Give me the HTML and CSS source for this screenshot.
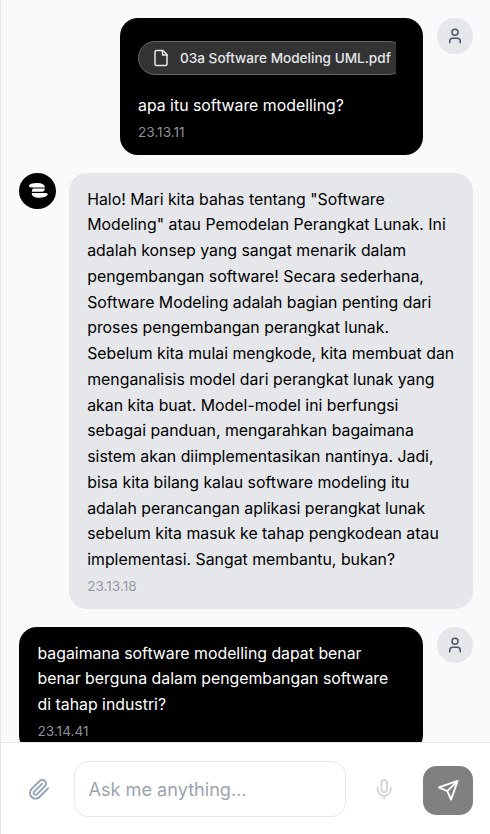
FILE: index.html
```html
<!DOCTYPE html>
<html lang="id">
<head>
<meta charset="utf-8">
<title>Chat</title>
<link rel="stylesheet" href="styles.css">
</head>
<body>
<div class="app">
  <main class="messages">
    <div class="row user">
      <div class="bubble dark">
        <div class="chip-clip">
          <div class="chip">
            <svg class="file-icon" viewBox="0 0 24 24"><path d="M14.5 2H6a2 2 0 0 0-2 2v16a2 2 0 0 0 2 2h12a2 2 0 0 0 2-2V7.500Z"/><path d="M14 2v6h6"/></svg>
            <span>03a Software Modeling UML.pdf</span>
          </div>
        </div>
        <p class="text">apa itu software modelling?</p>
        <time>23.13.11</time>
      </div>
      <div class="avatar"><svg viewBox="0 0 24 24"><circle cx="12" cy="7" r="4"/><path d="M19 21v-2a4 4 0 0 0-4-4H9a4 4 0 0 0-4 4v2"/></svg></div>
    </div>
    <div class="row bot">
      <div class="avatar logo"><svg viewBox="0 0 36 36"><path d="M9 12.500Q9.500 10 17 10Q24.800 10.200 25 14.400H12Q8.800 14.500 9 12.500Z"/><path d="M13 15.500H24.900Q24.500 18.700 22 18.700H11.800Q12 15.900 13 15.500Z"/><path d="M11.700 19.900H25.500Q28.400 19.900 27.500 22Q25.500 24.700 19 24.700Q11.500 24.600 11.700 19.900Z"/></svg></div>
      <div class="bubble light">
        <p class="text">Halo! Mari kita bahas tentang "Software<br>Modeling" atau Pemodelan Perangkat Lunak. Ini<br>adalah konsep yang sangat menarik dalam<br>pengembangan software! Secara sederhana,<br>Software Modeling adalah bagian penting dari<br>proses pengembangan perangkat lunak.<br>Sebelum kita mulai mengkode, kita membuat dan<br>menganalisis model dari perangkat lunak yang<br>akan kita buat. Model-model ini berfungsi<br>sebagai panduan, mengarahkan bagaimana<br>sistem akan diimplementasikan nantinya. Jadi,<br>bisa kita bilang kalau software modeling itu<br>adalah perancangan aplikasi perangkat lunak<br>sebelum kita masuk ke tahap pengkodean atau<br>implementasi. Sangat membantu, bukan?</p>
        <time>23.13.18</time>
      </div>
    </div>
    <div class="row user">
      <div class="bubble dark wide">
        <p class="text">bagaimana software modelling dapat benar<br>benar berguna dalam pengembangan software<br>di tahap industri?</p>
        <time>23.14.41</time>
      </div>
      <div class="avatar"><svg viewBox="0 0 24 24"><circle cx="12" cy="7" r="4"/><path d="M19 21v-2a4 4 0 0 0-4-4H9a4 4 0 0 0-4 4v2"/></svg></div>
    </div>
  </main>
  <footer class="composer">
    <button class="clip" aria-label="Attach"><svg viewBox="0 0 24 24"><path d="m21.440 11.050-9.190 9.190a6 6 0 0 1-8.490-8.490l8.570-8.570A4 4 0 1 1 18 8.840l-8.590 8.570a2 2 0 0 1-2.830-2.830l8.490-8.480"/></svg></button>
    <input type="text" placeholder="Ask me anything...">
    <button class="mic" aria-label="Voice"><svg viewBox="0 0 24 24"><path d="M12 2a3 3 0 0 0-3 3v7a3 3 0 0 0 6 0V5a3 3 0 0 0-3-3Z"/><path d="M19 10v2a7 7 0 0 1-14 0v-2M12 19v3"/></svg></button>
    <button class="send" aria-label="Send"><svg viewBox="0 0 24 24"><path d="M22 2 2 9 11 13 15 22ZM22 2 11 13"/></svg></button>
  </footer>
</div>
</body>
</html>
```
FILE: styles.css
```css
* { box-sizing: border-box; }
body { margin: 0; font-family: Inter, sans-serif; }
.app {
  height: 834px;
  display: flex;
  flex-direction: column;
  border-left: 1px solid #e5e7eb;
  background: #f9fafb;
  overflow: hidden;
}
.messages {
  height: 742px;
  flex: none;
  padding: 18px 17px 0 18px;
  display: flex;
  flex-direction: column;
  gap: 18px;
  overflow: hidden;
  background: #f9fafc;
}
.row { display: flex; flex: none; align-items: flex-start; }
.user { justify-content: flex-end; gap: 14px; }
.bot { gap: 13px; }
.bubble { padding: 13.500px 18px 13.750px; border-radius: 18px; }
.dark { width: 303px; background: #000; color: #fff; }
.bubble.wide { width: 404px; padding: 14px 18.500px 13.250px; }
.bubble.light { width: 404px; padding: 14px 18.200px 13.250px; background: #e5e7eb; color: #000; }
.text { margin: 0; font-size: 15.850px; line-height: 25.750px; white-space: nowrap; }
time {
  display: block;
  margin-top: 4.500px;
  font-size: 13.600px;
  line-height: 18px;
  color: #9ca3af;
}
.dark time { color: #8f9197; }
.light time { margin-top: 4px; padding-bottom: 0.500px; color: #9799a5; }
.wide time { margin-top: 4px; }
.chip-clip { width: 258px; overflow: hidden; margin: 9px 0 18px; }
.chip {
  width: 268px;
  height: 34px;
  display: flex;
  align-items: center;
  gap: 10px;
  padding-left: 13px;
  border: 1px solid #666;
  border-radius: 17px;
  background: #333;
  color: #e5e7eb;
  font-size: 13.580px;
  font-weight: 500;
  white-space: nowrap;
}
svg {
  display: block;
  fill: none;
  stroke: currentColor;
  stroke-width: 2;
  stroke-linecap: round;
  stroke-linejoin: round;
}
.file-icon { width: 18px; height: 18px; }
.avatar {
  flex: none;
  width: 36px;
  height: 36px;
  display: grid;
  place-items: center;
  border-radius: 50%;
  background: #e5e7eb;
  color: #4b5563;
}
.avatar svg { width: 18px; height: 18px; }
.avatar.logo { width: 37px; background: #000; color: #fff; }
.avatar.logo svg { width: 36px; height: 36px; fill: #fff; stroke: none; }
.composer {
  flex: 1;
  display: flex;
  align-items: center;
  border-top: 1px solid #e5e7eb;
  padding: 2px 17px 0 15px;
  background: #fff;
}
button { display: grid; place-items: center; border: 0; padding: 0; background: none; }
.clip { width: 46px; height: 46px; color: #94a3b8; }
.clip svg, .mic svg, .send svg { width: 22.500px; height: 22.500px; }
input {
  width: 272px;
  height: 56px;
  margin: 0 0 2px 12px;
  padding: 0 13.500px;
  border: 1px solid #e5e7eb;
  border-radius: 14px;
  background: #fff;
  font: 18.130px Inter, sans-serif;
}
input::placeholder { color: #9ca3af; opacity: 1; }
.mic { width: 46px; height: 46px; margin-left: 15px; color: #d1d5db; }
.send { width: 50px; height: 49px; margin: 1px 0 0 auto; border-radius: 13.500px; background: #808080; color: #fff; }
```
